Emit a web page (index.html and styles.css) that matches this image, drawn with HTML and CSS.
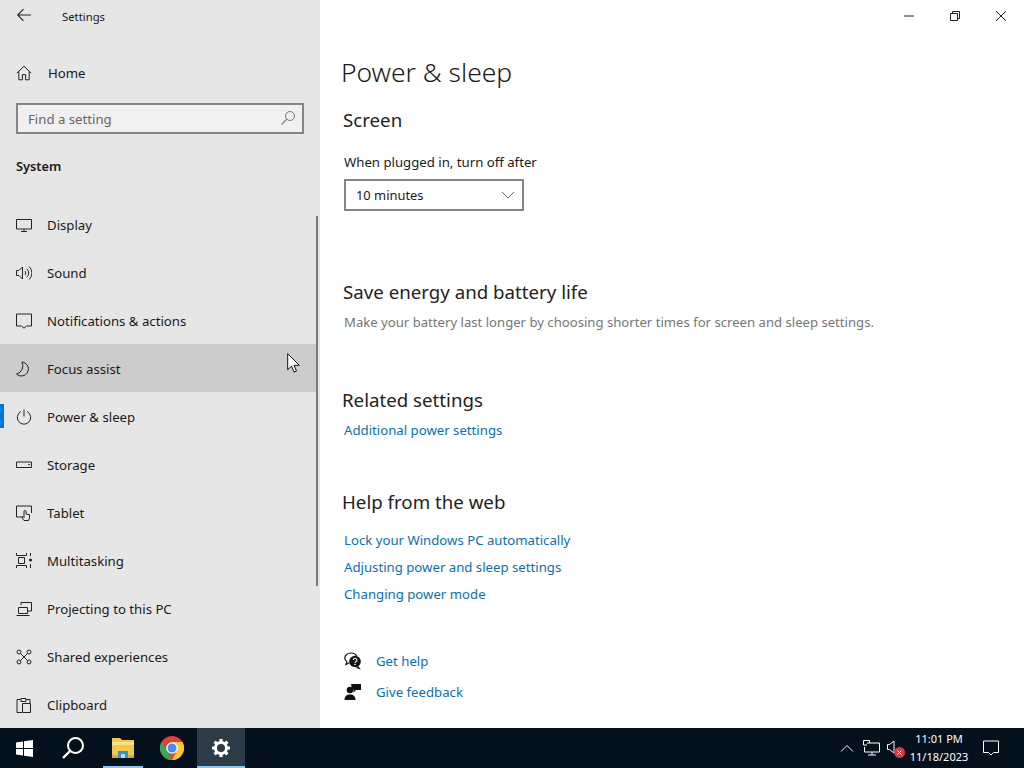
FILE: index.html
```html
<!DOCTYPE html>
<html lang="en">
<head>
    <meta charset="UTF-8">
    <title>Settings</title>
    <link rel="stylesheet" href="styles.css">
</head>
<body>

<div class="window">
    <aside class="sidebar">
        <div class="title-row">
            <svg class="back-icon" width="16" height="16" viewBox="0 0 16 16"><path d="M15 8H2M7.5 2.2 1.700 8l5.800 5.800" fill="none" stroke="#222" stroke-width="1.100"/></svg>
            <span class="app-title">Settings</span>
        </div>

        <div class="nav-row home-row">
            <svg class="nav-icon" width="16" height="16" viewBox="0 0 16 16"><path d="M.8 8.200 8 1.200l7.200 7M2.800 6.600v8.200h3.600V9.600h3.200v5.200h3.600V6.600" fill="none" stroke="#222"/></svg>
            <span>Home</span>
        </div>

        <div class="search-box">
            <span class="search-text">Find a setting</span>
            <svg width="16" height="16" viewBox="0 0 16 16"><circle cx="10" cy="6" r="4.500" fill="none" stroke="#777"/><path d="M6.800 9.200 1.500 14.500" stroke="#777" stroke-width="1.100"/></svg>
        </div>

        <h2 class="group-title">System</h2>

        <nav class="nav-list">
            <div class="nav-row">
                <svg class="nav-icon" width="16" height="16" viewBox="0 0 16 16"><path d="M.5 2.500h15v9.500H.5zM8 12v2.500M5 14.500h6" fill="none" stroke="#222"/></svg>
                <span>Display</span>
            </div>
            <div class="nav-row">
                <svg class="nav-icon" width="16" height="16" viewBox="0 0 16 16"><path d="M.5 5.500h2.500L6.500 2v12L3 10.500H.5zM8.800 6a2.600 2.600 0 0 1 0 4M10.800 3.800a5.600 5.600 0 0 1 0 8.400M13 1.500a8.600 8.600 0 0 1 0 13" fill="none" stroke="#222"/></svg>
                <span>Sound</span>
            </div>
            <div class="nav-row">
                <svg class="nav-icon" width="16" height="16" viewBox="0 0 16 16"><path d="M.5 1h15v12h-5L8 15.200 5.500 13h-5z" fill="none" stroke="#222"/></svg>
                <span>Notifications &amp; actions</span>
            </div>
            <div class="nav-row hovered">
                <svg class="nav-icon" width="16" height="16" viewBox="0 0 16 16"><path d="M6 1A7 7 0 1 1 .5 13 8.500 8.500 0 0 0 6 1z" fill="none" stroke="#222"/></svg>
                <span>Focus assist</span>
            </div>
            <div class="nav-row active">
                <svg class="nav-icon" width="16" height="16" viewBox="0 0 16 16"><path d="M8 .5v7M4.800 2.600a6.700 6.700 0 1 0 6.400 0" fill="none" stroke="#222"/></svg>
                <span>Power &amp; sleep</span>
            </div>
            <div class="nav-row">
                <svg class="nav-icon" width="16" height="16" viewBox="0 0 16 16"><path d="M.5 5h15v5.500H.5z" fill="none" stroke="#222"/><path d="M12 7.700h2" stroke="#222"/></svg>
                <span>Storage</span>
            </div>
            <div class="nav-row">
                <svg class="nav-icon" width="16" height="16" viewBox="0 0 16 16"><path d="M6 12H.5V1h15v7M8 15.500c-1-1-1.500-2-2-3.500l1-.5 1 1V6.500a1 1 0 0 1 2 0V9l3.500.7v3.300l-1 2.500z" fill="none" stroke="#222"/></svg>
                <span>Tablet</span>
            </div>
            <div class="nav-row">
                <svg class="nav-icon" width="16" height="16" viewBox="0 0 16 16"><path d="M.5 0v2.500h10V0M2.500 4.500h6v6h-6zM.5 15v-2.500h10V15M14.500 0v3M14.500 11v4" fill="none" stroke="#222"/><circle cx="14.500" cy="7" r="1.500" fill="#222"/></svg>
                <span>Multitasking</span>
            </div>
            <div class="nav-row">
                <svg class="nav-icon" width="16" height="16" viewBox="0 0 16 16"><path d="M5 4V1.500h10.500v8.500H12M2.500 6.500h9v6h-9zM.5 14.500h13" fill="none" stroke="#222"/></svg>
                <span>Projecting to this PC</span>
            </div>
            <div class="nav-row">
                <svg class="nav-icon" width="16" height="16" viewBox="0 0 16 16"><g fill="none" stroke="#222"><circle cx="3" cy="3" r="2"/><circle cx="13" cy="3" r="2"/><circle cx="3" cy="13" r="2"/><circle cx="13" cy="13" r="2"/><path d="M4.500 4.500l7 7M11.500 4.500l-7 7"/></g></svg>
                <span>Shared experiences</span>
            </div>
            <div class="nav-row">
                <svg class="nav-icon" width="16" height="16" viewBox="0 0 16 16"><path d="M1 2.500h3.500M10.500 2.500H14v4M1 2.500v13h5M5 1.500h5v3H5zM6.500 6.500h8v9h-8z" fill="none" stroke="#222"/></svg>
                <span>Clipboard</span>
            </div>
        </nav>

        <div class="scrollbar"></div>
    </aside>

    <main class="content">
        <div class="window-buttons">
            <svg width="12" height="12" viewBox="0 0 12 12"><path d="M1 6h10" stroke="#222"/></svg>
            <svg width="12" height="12" viewBox="0 0 12 12"><path d="M1.500 3.500h7v7h-7zM3.500 3.500v-2h7v7h-2" fill="none" stroke="#222"/></svg>
            <svg width="12" height="12" viewBox="0 0 12 12"><path d="M1 1l10 10M11 1 1 11" stroke="#222"/></svg>
        </div>

        <h1>Power &amp; sleep</h1>

        <h3 class="screen-head">Screen</h3>
        <p class="field-label">When plugged in, turn off after</p>
        <div class="dropdown">
            <span>10 minutes</span>
            <svg width="14" height="8" viewBox="0 0 14 8"><path d="M1 1l6 6 6-6" fill="none" stroke="#666"/></svg>
        </div>

        <h3 class="energy-head">Save energy and battery life</h3>
        <p class="muted">Make your battery last longer by choosing shorter times for screen and sleep settings.</p>

        <h3 class="related-head">Related settings</h3>
        <a class="link">Additional power settings</a>

        <h3 class="web-head">Help from the web</h3>
        <div class="link-list">
            <a class="link">Lock your Windows PC automatically</a>
            <a class="link">Adjusting power and sleep settings</a>
            <a class="link">Changing power mode</a>
        </div>

        <div class="help-list">
            <div class="help-row">
                <svg width="18" height="18" viewBox="0 0 18 18"><path d="M7 1C3.400 1 .8 3.200.8 6c0 1.500.8 2.900 2 3.800L2 12.500l3.300-1.700" fill="none" stroke="#111" stroke-width="1.200"/><path d="M7 1c2.800 0 5 1.300 5.800 3.300" fill="none" stroke="#111" stroke-width="1.200"/><circle cx="11" cy="9.500" r="5.800" fill="#111"/><path d="M14 14l3 3.500-5-1.500z" fill="#111"/><path d="M9.300 8a1.800 1.800 0 1 1 2.500 1.700c-.6.300-.8.600-.8 1.200" fill="none" stroke="#fff" stroke-width="1.100"/><circle cx="11" cy="12.500" r=".8" fill="#fff"/></svg>
                <a class="link">Get help</a>
            </div>
            <div class="help-row">
                <svg width="18" height="18" viewBox="0 0 18 18"><circle cx="6" cy="7" r="3.300" fill="#111"/><path d="M.5 17c0-3.500 2-5.500 5.500-5.500s5.500 2 5.500 5.500z" fill="#111"/><path d="M7 1h10v6h-5l-2.500 2.500V6.300H8z" fill="#111"/></svg>
                <a class="link">Give feedback</a>
            </div>
        </div>
    </main>
</div>

<footer class="taskbar">
    <div class="task-left">
        <div class="task-btn">
            <svg width="17" height="17" viewBox="0 0 17 17"><path d="M0 2.500 7 1.500v6.500H0zM8 1.300 17 0v8H8zM0 9h7v6.500L0 14.500zM8 9h9v8l-9-1.300z" fill="#fff"/></svg>
        </div>
        <div class="task-btn">
            <svg width="24" height="24" viewBox="0 0 24 24"><circle cx="14.500" cy="9.500" r="7.500" fill="none" stroke="#fff" stroke-width="2"/><path d="M9 15 2 22" stroke="#fff" stroke-width="2.400"/></svg>
        </div>
        <div class="task-btn running folder-btn">
            <svg width="24" height="22" viewBox="0 0 24 22"><path d="M1 1h8l2 2h12v18H1z" fill="#f3c64d"/><path d="M1 5h22v3H1z" fill="#fbe08a"/><path d="M1 18h22v3H1z" fill="#d9a93a"/><path d="M7 14h10v7H7z" fill="#3f8fc4"/><path d="M10 17h4v4h-4z" fill="#b9d7ea"/></svg>
        </div>
        <div class="task-btn">
            <svg width="24" height="24" viewBox="0 0 24 24">
                <circle cx="12" cy="12" r="12" fill="#db4437"/>
                <path d="M12 24a12 12 0 0 1-10.400-18L7 14.500 12 24z" fill="#3da35a"/>
                <path d="M12 24a12 12 0 0 0 10.400-18H12l5 8.500z" fill="#fcc934"/>
                <circle cx="12" cy="12" r="5.800" fill="#fff"/>
                <circle cx="12" cy="12" r="4.500" fill="#4a8af0"/>
            </svg>
        </div>
        <div class="task-btn running current">
            <svg width="20" height="20" viewBox="0 0 20 20"><circle cx="10" cy="10" r="5.500" fill="none" stroke="#fff" stroke-width="3"/><path d="M10 1v3M10 16v3M1 10h3M16 10h3M3.600 3.600l2.200 2.200M14.200 14.200l2.200 2.200M16.400 3.600l-2.200 2.200M5.800 14.200l-2.200 2.200" stroke="#fff" stroke-width="3.200"/></svg>
        </div>
    </div>
    <div class="tray">
        <svg width="14" height="8" viewBox="0 0 14 8"><path d="M1 7.500 7 1.500l6 6" fill="none" stroke="#fff"/></svg>
        <svg class="tray-net" width="17" height="16" viewBox="0 0 17 16"><path d="M4 5H.5V.5h6V3M4 3h12.500v9h-15V7M9 12v3M5 15h8" fill="none" stroke="#fff"/></svg>
        <div class="tray-sound">
            <svg width="8" height="14" viewBox="0 0 8 14"><path d="M.5 4.500h2L7 1v12L2.500 9.500h-2z" fill="none" stroke="#fff"/></svg>
            <svg class="mute-badge" width="11" height="11" viewBox="0 0 11 11"><circle cx="5.500" cy="5.500" r="5.500" fill="#c9404d"/><path d="M3.500 3.500l4 4M7.500 3.500l-4 4" stroke="#fff"/></svg>
        </div>
        <div class="clock">
            <span>11:01 PM</span>
            <span>11/18/2023</span>
        </div>
        <svg class="tray-notify" width="16" height="16" viewBox="0 0 16 16"><path d="M.5 1h15v11.500h-5L8 15l-2.500-2.500h-5z" fill="none" stroke="#fff"/></svg>
    </div>
</footer>

<!-- mouse pointer -->
<svg class="cursor" width="13" height="20" viewBox="0 0 13 20"><path d="M.7.7v16l3.800-3.600 2.600 6 2.400-1-2.500-5.800h5.300z" fill="#fff" stroke="#111"/></svg>

</body>
</html>
```

FILE: styles.css
```css
html, body {
    margin: 0;
    padding: 0;
    height: 100%;
    overflow: hidden;
}
body {
    font-family: "Noto Sans", "Open Sans", sans-serif;
    font-size: 13.2px;
    color: #1a1a1a;
    background-color: #fff;
    position: relative;
}
h1, h2, h3, p {
    margin: 0;
    font-weight: normal;
}
.window {
    display: flex;
    height: 728px;
}

/* sidebar */
.sidebar {
    width: 320px;
    flex-shrink: 0;
    background-color: #e6e6e6;
    position: relative;
    display: flex;
    flex-direction: column;
    overflow: hidden;
}
.title-row {
    height: 32px;
    padding-top: 2px;
    box-sizing: border-box;
    display: flex;
    align-items: center;
}
.back-icon {
    margin-left: 16px;
    margin-top: -2px;
}
.app-title {
    margin-left: 30px;
    font-size: 11.3px;
}
.nav-row {
    height: 48px;
    box-sizing: border-box;
    padding: 2px 0 0 16px;
    margin-right: 2px;
    flex-shrink: 0;
    display: flex;
    align-items: center;
    position: relative;
}
.nav-row span {
    margin-left: 15px;
}
.home-row {
    margin-top: 17px;
}
.home-row span {
    margin-left: 16px;
}
.nav-row.hovered {
    background-color: #cccccc;
}
.nav-row.active::before {
    content: "";
    position: absolute;
    left: 0;
    top: 12px;
    width: 4px;
    height: 24px;
    background-color: #0078d7;
}
.search-box {
    margin: 7px 16px 0;
    height: 32px;
    box-sizing: border-box;
    border: 2px solid #858585;
    background-color: #f0f0f0;
    display: flex;
    align-items: center;
    justify-content: space-between;
    padding: 2px 6px 0 10px;
}
.search-box svg {
    margin-top: -2px;
}
.search-text {
    color: #666;
}
.group-title {
    margin: 22px 0 0 16px;
    font-size: 12.8px;
    font-weight: 600;
    line-height: 20px;
}
.nav-list {
    margin-top: 24px;
}
.scrollbar {
    position: absolute;
    left: 316px;
    top: 216px;
    width: 2px;
    height: 370px;
    background-color: #7a7a7a;
}

/* content */
.content {
    flex: 1;
    position: relative;
    padding-left: 24px;
}
.window-buttons {
    position: absolute;
    top: 10px;
    right: 17px;
    display: flex;
    gap: 34px;
}
h1 {
    font-size: 26.4px;
    font-weight: 300;
    line-height: 36px;
    margin: 54px 0 0 -3px;
}
h3 {
    font-size: 18.7px;
    line-height: 28px;
    margin-left: -1px;
    color: #222;
}
.screen-head {
    margin-top: 16px;
}
.field-label {
    margin-top: 18px;
    line-height: 20px;
}
.dropdown {
    width: 180px;
    height: 32px;
    margin-top: 7px;
    box-sizing: border-box;
    border: 2px solid #858585;
    display: flex;
    align-items: center;
    justify-content: space-between;
    padding: 0 7px 0 10px;
    font-size: 12.9px;
}
.energy-head {
    margin-top: 67px;
}
.muted {
    color: #767676;
    margin-top: 6px;
    line-height: 20px;
    font-size: 13.13px;
}
.related-head {
    margin-top: 54px;
    margin-left: -2px;
}
.link {
    color: #0b6fae;
    display: block;
    line-height: 20px;
}
.related-head + .link {
    margin-top: 6px;
}
.web-head {
    margin-top: 48px;
    margin-left: -2px;
}
.link-list {
    margin-top: 14px;
    display: flex;
    flex-direction: column;
    gap: 7px;
}
.help-list {
    margin-top: 47px;
    display: flex;
    flex-direction: column;
    gap: 11px;
}
.help-row {
    display: flex;
    align-items: center;
    gap: 14px;
    height: 20px;
}

/* taskbar */
.taskbar {
    height: 40px;
    background-color: #04111d;
    display: flex;
    justify-content: space-between;
    color: #fff;
}
.task-left {
    display: flex;
    gap: 1px;
}
.task-btn {
    width: 48px;
    height: 40px;
    box-sizing: border-box;
    display: flex;
    align-items: center;
    justify-content: center;
    position: relative;
}
.folder-btn {
    margin-left: 1px;
}
.task-btn.running::after {
    content: "";
    position: absolute;
    left: 4px;
    right: 4px;
    bottom: 0;
    height: 2px;
    background-color: #8ec5ea;
}
.task-btn.current {
    background-color: #2b3b47;
}
.task-btn.current::after {
    left: 0;
    right: 0;
}
.tray {
    display: flex;
    align-items: center;
    padding-right: 25px;
}
.tray-net {
    margin-left: 9px;
}
.tray-sound {
    position: relative;
    width: 19px;
    height: 16px;
    margin-left: 7px;
}
.mute-badge {
    position: absolute;
    left: 7px;
    top: 7px;
}
.clock {
    display: flex;
    flex-direction: column;
    align-items: center;
    font-size: 11px;
    line-height: 18px;
    width: 66px;
}
.tray-notify {
    margin-left: 11px;
}
.cursor {
    position: absolute;
    left: 287px;
    top: 353px;
}
```
